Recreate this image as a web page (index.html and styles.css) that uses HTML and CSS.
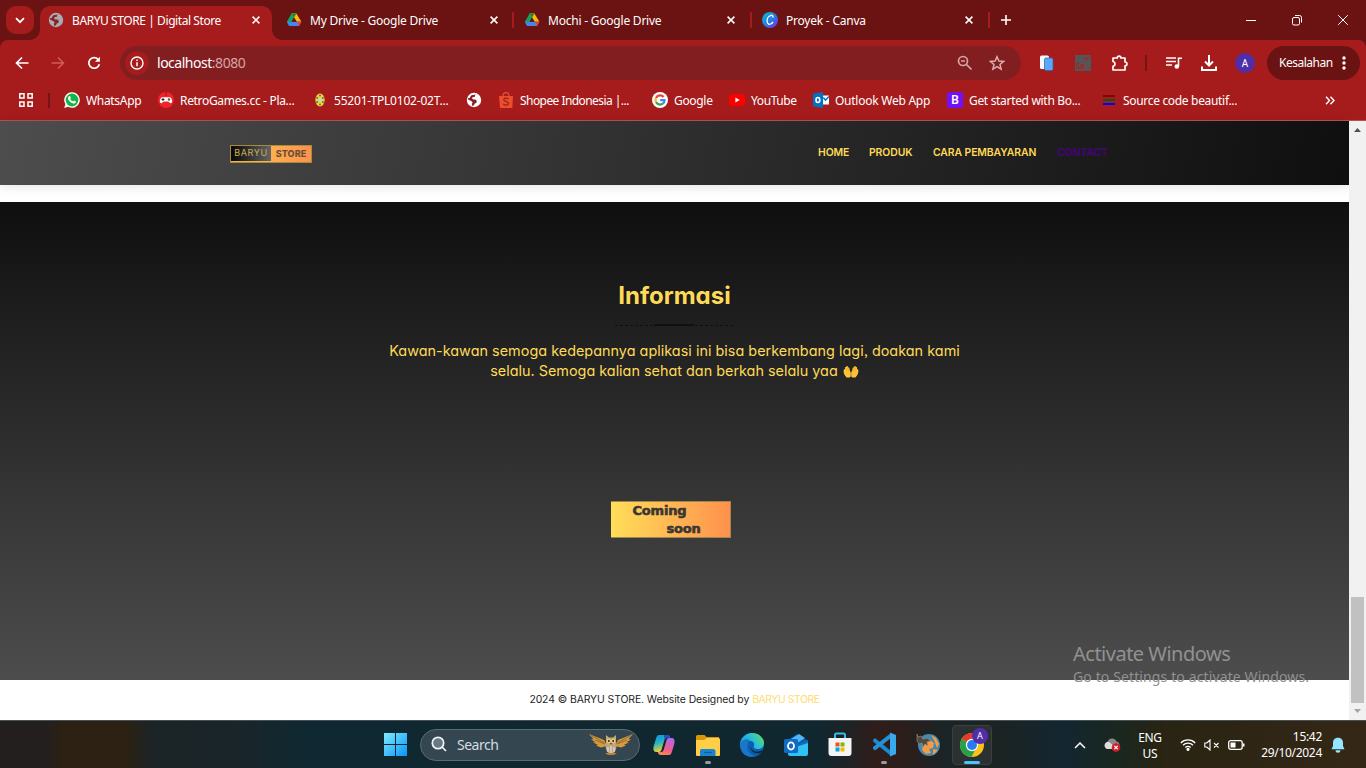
FILE: index.html
```html
<!DOCTYPE html>
<html lang="id">
<head>
<meta charset="utf-8">
<title>BARYU STORE | Digital Store</title>
<link rel="stylesheet" href="styles.css">
</head>
<body>
<svg width="0" height="0" class="defs" aria-hidden="true">
  <defs>
    <symbol id="drive" viewBox="0 0 16 16"><path fill="#12a65a" d="M5.6 1.5h4.7L3.3 14 .9 9.8z"/><path fill="#fbbc04" d="M5.6 1.5h4.8l5 8.3h-4.6z"/><path fill="#4285f4" d="M3.4 9.8h12L13 14H3.1L.9 9.8z"/><path fill="#188038" d="M5.6 1.5h4.8L8 5.6z"/><path fill="#6e1212" d="M8 5.6l2.4 4.2H5.6z"/><path fill="#ea4335" d="M10.9 9.8h4.5L13 14z"/></symbol>
    <symbol id="close" viewBox="0 0 10 10"><path d="M1.6 1.6l6.8 6.8M8.4 1.6L1.6 8.4" stroke="#fff" stroke-width="1.5"/></symbol>
    <symbol id="globe" viewBox="0 0 16 16"><circle cx="8" cy="8" r="7.2" fill="currentColor"/><path class="land" d="M10.500 2.400L9 3.300 8.800 5H6.700L6 6.600l1.300.9h2.200l1.300 1.600-.4 1.900-1.700.5-.7 1.800-1.700.6-.5-2.200.9-1.300-1.500-1.300-2.900-1.300-.4-1.600 1.900-.2.600-1.600L5.500 3.200l2.800-.5z"/></symbol>
  </defs>
</svg>

<header class="browser">
  <div class="tabstrip">
    <div class="tabsearch"><svg width="10" height="7" viewBox="0 0 10 7"><path d="M1 1.200l4 4 4-4" fill="none" stroke="#fff" stroke-width="1.800"/></svg></div>
    <div class="tab active"><svg class="fav gray" width="16" height="16"><use href="#globe"/></svg><span class="title t1">BARYU STORE | Digital Store</span><svg class="x" width="10" height="10"><use href="#close"/></svg></div>
    <div class="tab"><svg class="fav" width="16" height="16"><use href="#drive"/></svg><span class="title">My Drive - Google Drive</span><svg class="x" width="10" height="10"><use href="#close"/></svg></div>
    <div class="tab ruled"><svg class="fav" width="16" height="16"><use href="#drive"/></svg><span class="title">Mochi - Google Drive</span><svg class="x" width="10" height="10"><use href="#close"/></svg></div>
    <div class="tab ruled"><svg class="fav" width="16" height="16" viewBox="0 0 16 16"><defs><linearGradient id="cv" x1="0" y1="0" x2="1" y2="1"><stop offset="0" stop-color="#00c4cc"/><stop offset=".55" stop-color="#2a78e4"/><stop offset="1" stop-color="#7d2ae8"/></linearGradient></defs><circle cx="8" cy="8" r="8" fill="url(#cv)"/><path d="M10.900 5.700c.4-1.800-.7-2.700-2-2.400-2.500.6-4 3.400-3.800 6 .2 2.500 1.800 3.500 3.600 2.700.9-.4 1.800-1.200 2.300-2.100" fill="none" stroke="#fff" stroke-width="1.300"/></svg><span class="title">Proyek - Canva</span><svg class="x" width="10" height="10"><use href="#close"/></svg></div>
    <div class="newtab"><svg width="12" height="12" viewBox="0 0 12 12"><path d="M6 1v10M1 6h10" stroke="#fff" stroke-width="1.600"/></svg></div>
    <div class="wincontrols">
      <svg width="12" height="12" viewBox="0 0 12 12"><path d="M1 6.500h10" stroke="#fff"/></svg>
      <svg width="12" height="12" viewBox="0 0 12 12" fill="none" stroke="#fff"><rect x="1.500" y="3.500" width="7" height="7.500" rx="1.500"/><path d="M4 1.500h4.500a2 2 0 0 1 2 2V8.500"/></svg>
      <svg width="12" height="12" viewBox="0 0 12 12"><path d="M1.200 1.200l9.600 9.600M10.800 1.200l-9.600 9.600" stroke="#fff"/></svg>
    </div>
  </div>

  <div class="toolbar">
    <div class="navbtns">
      <svg width="14" height="14" viewBox="0 0 14 14" fill="none" stroke="#fff" stroke-width="1.700"><path d="M13.500 7H2M7 1.500L1.500 7 7 12.500"/></svg>
      <svg width="14" height="14" viewBox="0 0 14 14" fill="none" stroke="#d05c5c" stroke-width="1.500"><path d="M.5 7H12M7 1.500L12.500 7 7 12.500"/></svg>
      <svg width="14" height="14" viewBox="0 0 14 14"><path d="M12.300 8.200A5.300 5.300 0 1 1 11 3.300l1 1" fill="none" stroke="#fff" stroke-width="1.700"/><path d="M12.900.8v5H8z" fill="#fff"/></svg>
    </div>
    <div class="omnibox">
      <span class="info"><svg width="14" height="14" viewBox="0 0 14 14"><circle cx="7" cy="7" r="6" fill="none" stroke="#fff" stroke-width="1.400"/><path d="M7 6.200v4M7 3.500v1.500" stroke="#fff" stroke-width="1.500"/></svg></span>
      <span class="url">localhost<span class="port">:8080</span></span>
      <svg class="glass" width="16" height="16" viewBox="0 0 16 16" fill="none" stroke="#d3a6a6" stroke-width="1.700"><circle cx="6" cy="6" r="4.500"/><path d="M9.500 9.500l5 5M4 6h4"/></svg>
      <svg width="16" height="16" viewBox="0 0 16 16" fill="none" stroke="#d9adad" stroke-width="1.500"><path d="M8 1.700l1.900 4.300 4.700.4-3.600 3.100 1.100 4.600L8 11.600l-4.100 2.500L5 9.500 1.400 6.400l4.700-.4z"/></svg>
    </div>
    <div class="exts">
      <svg class="e1" width="16" height="18" viewBox="0 0 16 18"><rect x="1" y="1.500" width="9" height="13.500" rx="1.500" fill="#f6faff"/><rect x="5.500" y="4" width="8.500" height="12.500" rx="1.500" fill="#5ba7f8" stroke="#2461b5" stroke-width=".7"/></svg>
      <svg class="e2" width="16" height="16" viewBox="0 0 16 16"><path fill="#555" d="M0 0h16v16H0z"/><path d="M8 3.500h2l1 1 2-2h2" fill="none" stroke="#b0201f" stroke-width="1.200"/><text x="1" y="14" class="se">Se</text></svg>
      <svg class="e3" width="18" height="18" viewBox="0 0 18 18"><path d="M2 4h4.300a1.800 1.800 0 0 1 3.600 0H14v4a1.900 1.900 0 0 1 0 3.800V16H2v-3.700c2.700-.6 2.700-4.200 0-4.800z" fill="none" stroke="#fff" stroke-width="1.700" stroke-linejoin="round"/></svg>
      <span class="extrule"></span>
      <svg class="e4" width="16" height="14" viewBox="0 0 16 14"><path d="M0 2h10M0 5.500h10M0 9h6M12.500 10V2.200H16" fill="none" stroke="#fff" stroke-width="1.600"/><circle cx="10.800" cy="10.500" r="2.300" fill="#fff"/></svg>
      <svg class="e5" width="18" height="18" viewBox="0 0 18 18" fill="none" stroke="#fff" stroke-width="2"><path d="M9 1v10M5 7.500L9 11.500l4-4M2 12.500V16h14v-3.500"/></svg>
      <span class="avatar">A</span>
    </div>
    <div class="error"><span>Kesalahan</span><svg width="4" height="14" viewBox="0 0 4 14" fill="#fff"><circle cx="2" cy="2" r="1.700"/><circle cx="2" cy="7" r="1.700"/><circle cx="2" cy="12" r="1.700"/></svg></div>
  </div>

  <div class="bookmarks">
    <svg class="apps" width="14" height="14" viewBox="0 0 14 14" fill="none" stroke="#fff" stroke-width="1.500"><path d="M.8.800h4.200V5H.8zM9 .8h4.200V5H9zM.8 9h4.200v4.200H.8zM9 9h4.200v4.200H9z"/></svg>
    <span class="bmrule"></span>
    <div class="bm b1"><svg width="16" height="16" viewBox="0 0 16 16"><path fill="#fff" d="M8 .2a7.800 7.800 0 1 1-3.800 14.600L.2 16l1.200-3.900A7.800 7.800 0 0 1 8 .2z"/><circle cx="8" cy="8" r="6.400" fill="#13b547"/><path d="M5 4.300l1-.2.900 2-.7.900a5.500 5.500 0 0 0 2.800 2.500l.9-.9 2 .9c.2 2-1.900 2.400-3.500 1.800C5.900 10.300 4 8 4 6.500c0-1 .4-1.800 1-2.200z" fill="#fff"/></svg><span>WhatsApp</span></div>
    <div class="bm b2"><svg width="16" height="16" viewBox="0 0 16 16"><circle cx="8" cy="8" r="8" fill="#f22329"/><path d="M8 0v4" stroke="#9e1015"/><path fill="#fff" d="M4.500 5.200h7c2.800 0 3.600 6 1.200 6-1.400 0-1.500-1.600-3-1.600H6.300c-1.500 0-1.600 1.600-3 1.600-2.400 0-1.600-6 1.200-6z"/><path d="M3.500 7.500h3M5 6v3" stroke="#222"/><circle cx="11" cy="7.500" r="1.200" fill="#555"/></svg><span>RetroGames.cc - Pla...</span></div>
    <div class="bm b3"><svg width="16" height="16" viewBox="0 0 16 16"><ellipse cx="8" cy="8" rx="4.600" ry="6.400" fill="#eedb22"/><g fill="#5b6a87"><circle cx="8" cy="3.600" r="1"/><circle cx="5.200" cy="6" r="1"/><circle cx="10.800" cy="6" r="1"/><circle cx="5.200" cy="10" r="1"/><circle cx="10.800" cy="10" r="1"/><circle cx="8" cy="12.400" r="1"/></g><circle cx="8" cy="8" r="2" fill="#c9cfd8"/></svg><span>55201-TPL0102-02T...</span></div>
    <div class="bm b4"><svg class="white" width="16" height="16"><use href="#globe"/></svg></div>
    <div class="bm b5"><svg width="16" height="16" viewBox="0 0 16 16"><path fill="#ee4d2d" d="M1 4h14l-.7 12H2z"/><path d="M5 4c0-4.400 6-4.400 6 0" fill="none" stroke="#ee4d2d" stroke-width="1.200"/><path d="M10.500 7c-2-1.500-4.700-1-4.700.7 0 2 4.700 1.500 4.700 3.800 0 2-3.300 2-5.200.5" fill="none" stroke="#8f261b" stroke-width="1.300"/></svg><span>Shopee Indonesia |...</span></div>
    <div class="bm b6"><svg width="16" height="16" viewBox="0 0 16 16"><circle cx="8" cy="8" r="8" fill="#fff"/><g fill="none" stroke-width="2.200"><path d="M11.600 5A4.500 4.500 0 0 0 4 6" stroke="#ea4335"/><path d="M4 5.900a4.500 4.500 0 0 0 0 4.200" stroke="#fbbc04"/><path d="M4 10a4.500 4.500 0 0 0 7 1.400" stroke="#34a853"/><path d="M11 11.500c1-.8 1.500-2 1.500-3.300H8.200" stroke="#4285f4"/></g></svg><span>Google</span></div>
    <div class="bm b7"><svg width="16" height="16" viewBox="0 0 16 16"><rect y="2.300" width="16" height="11.400" rx="2.800" fill="#f00"/><path d="M6.400 5.500v5L10.700 8z" fill="#fff"/></svg><span>YouTube</span></div>
    <div class="bm b8"><svg width="16" height="16" viewBox="0 0 16 16"><path fill="#fff" d="M9 3.500h7v9H9z"/><path fill="#0072c6" d="M0 1.800L10 0v16L0 14.200z"/><path d="M10.300 5.500l2.200 2.700 3.300-3.700" fill="none" stroke="#0072c6" stroke-width="1.500"/><ellipse cx="4.900" cy="8" rx="1.900" ry="2.500" fill="none" stroke="#fff" stroke-width="1.600"/></svg><span>Outlook Web App</span></div>
    <div class="bm b9"><span class="boot">B</span><span>Get started with Bo...</span></div>
    <div class="bm b10"><svg width="16" height="16" viewBox="0 0 16 16"><path fill="#8b0000" d="M2 3h12v2H2z"/><path fill="#0a5a0a" d="M2 7h12v2H2z"/><path fill="#00f" d="M2 11h12v2H2z"/></svg><span>Source code beautif...</span></div>
    <svg class="more" width="10" height="9" viewBox="0 0 10 9" fill="none" stroke="#fff" stroke-width="1.400"><path d="M1 .8l3.500 3.700L1 8.200M5.500.8L9 4.500 5.500 8.200"/></svg>
  </div>
</header>

<div class="viewport">
  <main class="site">
    <div class="sitenav">
      <div class="logo"><span class="lb">BARYU</span><span class="ls">STORE</span></div>
      <nav><a class="n1">HOME</a><a class="n2">PRODUK</a><a class="n3">CARA PEMBAYARAN</a><a class="n4">CONTACT</a></nav>
    </div>
    <section class="hero">
      <h2>Informasi</h2>
      <div class="divider"><i></i></div>
      <p class="p1">Kawan-kawan semoga kedepannya aplikasi ini bisa berkembang lagi, doakan kami</p>
      <p class="p2"><span>selalu. Semoga kalian sehat dan berkah selalu yaa</span><svg width="16" height="14" viewBox="0 0 16 14"><path id="palm" d="M7.800 12.500L6.500 13.500H3.500C1.500 11.500.2 8.500.7 6.500L1 5l1 .6L2 3l1.200.2.300-1.200 1.300.2.500 1.300 1 .3.700 3.200.8 1.200z" fill="#fdc236"/><path d="M8.200 12.500l1.300 1h3c2-2 3.300-5 2.800-7L15 5l-1 .6V3l-1.200.2-.3-1.200-1.300.2-.5 1.300-1 .3-.7 3.200-.8 1.200z" fill="#fdc236"/><path d="M3.300 4l.9 3M5 3.700l.5 3M12.700 4l-.9 3M11 3.700l-.5 3" stroke="#ed9a23" stroke-width=".6"/></svg></p>
      <div class="coming"><span class="c1">Coming</span><span class="c2">soon</span></div>
    </section>
    <footer><span class="f1">2024 © BARYU STORE. Website Designed by</span><a class="f2">BARYU STORE</a></footer>
  </main>
  <div class="scrollbar"><svg width="7" height="4" viewBox="0 0 7 4"><path d="M0 4L3.500 0 7 4z" fill="#505050"/></svg><div class="thumb"></div><svg width="7" height="4" viewBox="0 0 7 4"><path d="M0 0h7L3.500 4z" fill="#a3a3a3"/></svg></div>
  <div class="watermark"><div class="w1">Activate Windows</div><div class="w2">Go to Settings to activate Windows.</div></div>
</div>

<div class="taskbar">
  <svg class="start" width="23" height="23" viewBox="0 0 23 23"><defs><linearGradient id="wn" x1="0" y1="0" x2="1" y2="1"><stop offset="0" stop-color="#80eaff"/><stop offset="1" stop-color="#0795f8"/></linearGradient></defs><path fill="url(#wn)" d="M0 0h11v11H0zM12 0h11v11H12zM0 12h11v11H0zM12 12h11v11H12z"/></svg>
  <div class="search">
    <svg width="16" height="16" viewBox="0 0 16 16" fill="#667985" stroke="#edf4f8" stroke-width="1.700"><circle cx="7" cy="7" r="5.700"/><path d="M11 11l4 4"/></svg>
    <span>Search</span>
    <svg class="owl" width="46" height="24" viewBox="0 0 46 24"><path d="M1 2l15 6 3 6-6 1.500-5-2 2-.8-5-2.200 2.500-.3L3 7.500l2.500-.3zM45 2L30 8l-3 6 6 1.500 5-2-2-.8 5-2.200-2.500-.3L43 7.500l-2.500-.3z" fill="#d89b3c"/><path d="M3 3.500l13 7M7 8l10 4M43 3.500l-13 7M39 8l-10 4" stroke="#8a5e28" stroke-width=".8"/><ellipse cx="23" cy="14" rx="5.500" ry="8" fill="#b9a48b"/><path d="M18 3l3 2.500h4L28 3v8l-5 3-5-3z" fill="#c7a96b"/><circle cx="20.800" cy="9" r="2" fill="#f3d78a"/><circle cx="25.200" cy="9" r="2" fill="#f3d78a"/><circle cx="20.800" cy="9" r="1" fill="#241f1a"/><circle cx="25.200" cy="9" r="1" fill="#241f1a"/><path d="M22 11h2l-1 2z" fill="#56401f"/><path d="M17 21h12l-3 2h-6z" fill="#b98338"/><path d="M20 15v5M23 14v7M26 15v5" stroke="#eee2cf" stroke-width="1.100"/></svg>
  </div>
  <div class="pinned">
    <div class="app"><svg width="24" height="24" viewBox="0 0 24 24"><defs><linearGradient id="co1" x1="0" y1="0" x2=".3" y2="1"><stop offset="0" stop-color="#168bea"/><stop offset=".5" stop-color="#24b5c0"/><stop offset="1" stop-color="#f4cf32"/></linearGradient><linearGradient id="co2" x1=".6" y1="0" x2=".2" y2="1"><stop offset="0" stop-color="#b267ed"/><stop offset=".6" stop-color="#f25c88"/><stop offset="1" stop-color="#ff8e45"/></linearGradient></defs><path fill="url(#co1)" d="M7 2h8c2 0 2.800 1 3.300 3h-3.500c-1.500 0-2 .8-2.400 2l-3 10c-.4 1.300-1 2-2.400 2H4c-3 0-3-4-2-7l2.200-7C4.700 3 5.500 2 7 2z"/><path fill="url(#co2)" d="M17 22H9c-2 0-2.800-1-3.300-3h3.500c1.500 0 2-.8 2.400-2l3-10c.4-1.300 1-2 2.400-2h3c3 0 3 4 2 7l-2.200 7c-.5 2-1.300 3-2.800 3z"/><path fill="#1752c0" d="M12 2h3c2 0 2.800 1 3.300 3h-3.500c-1 0-1.800.4-2.300 1.500z"/></svg></div>
    <div class="app run"><svg width="26" height="24" viewBox="0 0 26 24"><path fill="#d99608" d="M1 3.500A1.500 1.500 0 0 1 2.500 2h7l2 2H24v5H1z"/><path fill="#ffcd46" d="M1 7h8l3-2h11.500A1.500 1.500 0 0 1 25 6.500V22a1 1 0 0 1-1 1H2a1 1 0 0 1-1-1z"/><path fill="#1686d1" d="M5 23v-5c0-1.500.8-2 2-2h11c1.500 0 2.500.8 2.500 2v5z"/><path d="M9 19.500h8" stroke="#0d5e9e" stroke-width="1.200"/></svg></div>
    <div class="app"><svg width="26" height="26" viewBox="0 0 26 26"><defs><linearGradient id="ed" x1="0" y1=".7" x2="1" y2=".2"><stop offset="0" stop-color="#1698df"/><stop offset=".55" stop-color="#29bfd8"/><stop offset="1" stop-color="#62df55"/></linearGradient></defs><circle cx="13" cy="13" r="12" fill="#0d5dae"/><path fill="url(#ed)" d="M1 12C2 5 7 1 13 1c7 0 12 5 12 10 0 4-3 6-6 6-3 0-5-1-4-3 1-3-1-5-4-5-5 0-9 3-10 7z"/><path fill="#1976c9" d="M1 12c2-4 6-6 10-4-3 3-4 9 0 13 2 2 4 3 5 3C8 27 1 21 1 12z"/><path d="M12 13c-1 5 4 9 12 5l-1 2c-4 3-13 1-11-7z" fill="#10242d"/></svg></div>
    <div class="app"><svg width="26" height="24" viewBox="0 0 26 24"><path fill="#0a5daf" d="M5 7l9-6 10 6v6L14 19z"/><path fill="#51b7f4" d="M8 6l8-5 6 4-12 8z"/><path fill="#126dbe" d="M14 12l11-5v10H12z"/><path fill="#2fc3f3" d="M5 15h5l15-5v11a2 2 0 0 1-2 2H7c-1 0-2-1-2-2z"/><rect x="1" y="6" width="14" height="14" rx="1.500" fill="#0f6bc4"/><ellipse cx="8" cy="13" rx="3" ry="3.600" fill="none" stroke="#fff" stroke-width="1.800"/></svg></div>
    <div class="app"><svg width="24" height="25" viewBox="0 0 24 25"><path d="M7 7V3a1.500 1.500 0 0 1 1.500-1.500h7A1.500 1.500 0 0 1 17 3v4" fill="none" stroke="#38bdf3" stroke-width="2"/><path fill="#f4f4f4" d="M.5 6h23v15a3 3 0 0 1-3 3h-17a3 3 0 0 1-3-3z"/><path fill="#f25022" d="M7.500 10.500h4v4h-4z"/><path fill="#7fba00" d="M12.500 10.500h4v4h-4z"/><path fill="#00a4ef" d="M7.500 15.500h4v4h-4z"/><path fill="#ffb900" d="M12.500 15.500h4v4h-4z"/></svg></div>
    <div class="app run"><svg width="25" height="25" viewBox="0 0 25 25"><path fill="#168bd2" d="M1 8l2-2 16 13v5L1 9.500z"/><path fill="#2491d6" d="M1 16.500l2 2L19 6V1L1 15z"/><path fill="#39a9ee" d="M18 .5l6 2.500v19l-6 2.500z"/></svg></div>
    <div class="app"><svg width="26" height="26" viewBox="0 0 26 26"><circle cx="14" cy="13" r="11" fill="#4489b2"/><path fill="#f69a43" d="M8 13l7-5 4 3-1 5-4 1 2 4-5 1-4-4zM16 3l5 3 3 6-2 4-3-8zM18 17l5 1-5 5z"/><path d="M2 2l1 3 3-1 2 3 4-1 4 3-4 1 1 4-3-2-2 3-1-4-3 1-2-3z" fill="#4e4b46" stroke="#a59473" stroke-width=".6"/></svg></div>
    <div class="app current"><svg width="26" height="26" viewBox="0 0 26 26"><circle cx="13" cy="13" r="12" fill="#fbc318"/><path fill="#e33b2e" d="M13 13L2.600 7a12 12 0 0 1 20.800 0z"/><path fill="#25a14c" d="M2.600 7a12 12 0 0 0 9.800 18l5-9.200L13 13z"/><circle cx="13" cy="13" r="6.200" fill="#fff"/><circle cx="13" cy="13" r="4.900" fill="#287cf0"/></svg><span class="badge">A</span></div>
  </div>
  <div class="tray">
    <svg class="chev" width="12" height="8" viewBox="0 0 12 8"><path d="M1 7l5-5 5 5" fill="none" stroke="#fff" stroke-width="1.500"/></svg>
    <svg class="cloud" width="17" height="14" viewBox="0 0 17 14"><path d="M4 11a3.700 3.700 0 0 1-.5-7.200 4.800 4.800 0 0 1 9-.4c3 .4 4 4 2 6.600L12 11z" fill="#888"/><path d="M4 11a3.500 3.500 0 1 1 2.500-6l6 6z" fill="#ddd"/><circle cx="12" cy="9.500" r="4.300" fill="#d81d2a"/><path d="M10.300 7.800l3.400 3.400m0-3.400l-3.400 3.400" stroke="#fff" stroke-width="1.200"/></svg>
    <div class="lang"><span>ENG</span><span>US</span></div>
    <svg class="wifi" width="16" height="13" viewBox="0 0 16 13" fill="none" stroke="#fff" stroke-width="1.300"><path d="M.8 5a10 10 0 0 1 14.400 0M3 7.300a7 7 0 0 1 10 0M5.300 9.600a4 4 0 0 1 5.400 0"/><circle cx="8" cy="11.300" r="1" fill="#fff"/></svg>
    <svg class="vol" width="16" height="12" viewBox="0 0 16 12" fill="none" stroke="#fff" stroke-width="1.100"><path d="M.8 4v4h2L6 11V1L2.800 4zM10 4l4.500 4.500m0-4.500L10 8.500"/></svg>
    <svg class="bat" width="17" height="10" viewBox="0 0 17 10"><rect x=".7" y=".7" width="13.500" height="8.600" rx="2" fill="none" stroke="#fff" stroke-width="1.300"/><path fill="#fff" d="M2.500 2.500h5v5h-5zM15 3.500h1.500v3H15z"/></svg>
    <div class="clock"><span>15:42</span><span class="date">29/10/2024</span></div>
    <svg class="bell" width="14" height="16" viewBox="0 0 14 16"><path fill="#94e5ff" d="M7 .8c3.300 0 5 2.300 5 5V9l1.500 3.300H.5L2 9V5.800c0-2.700 1.700-5 5-5zM4.500 13.300h5a2.500 2.500 0 0 1-5 0z"/></svg>
  </div>
</div>
</body>
</html>
```
FILE: styles.css
```css
* { box-sizing: border-box; }
body { margin: 0; width: 1366px; height: 768px; overflow: hidden; font-family: "Noto Sans", "Open Sans", sans-serif; font-size: 12px; color: #fff; background: #fff; display: flex; flex-direction: column; }
svg { flex: none; display: block; }
span, a, p, h2 { white-space: nowrap; }
.defs { position: absolute; }
.browser { height: 121px; background: #6b1212; border-bottom: 1px solid #b85351; }

.tabstrip { height: 40px; display: flex; align-items: center; padding-left: 6px; }
.tabsearch { width: 28px; height: 28px; border-radius: 10px; background: #a61c1d; display: flex; align-items: center; justify-content: center; margin-right: 6px; }
.tab { width: 238px; height: 24px; display: flex; align-items: center; padding: 0 13px 0 12px; border-left: 2px solid transparent; }
.tab.ruled, .newtab { background: linear-gradient(#a61c1d, #a61c1d) 0 center / 2px 16px no-repeat; }
.tab.ruled { border: 0; padding-left: 12px; padding-right: 14px; }
.tab.active { width: 232px; height: 34px; align-self: flex-end; background: #a61c1d; border-radius: 10px 10px 0 0; padding: 0 11px 6px 8px; border: 0; position: relative; }
.tab.active::before, .tab.active::after { content: ""; position: absolute; bottom: 0; width: 10px; height: 10px; }
.tab.active::before { left: -10px; background: radial-gradient(circle at 0 0, transparent 9.5px, #a61c1d 10px); }
.tab.active::after { right: -10px; background: radial-gradient(circle at 100% 0, transparent 9.5px, #a61c1d 10px); }
.tab.active + .tab { width: 240px; }
.title { margin-left: 8px; flex: 1; letter-spacing: -.22px; }
.title.t1 { letter-spacing: -.42px; }
.gray { color: #a6adb2; }
.white { color: #fff; }
.land { fill: #8d2025; }
.newtab { width: 36px; height: 24px; display: flex; align-items: center; padding-left: 12px; }
.wincontrols { margin-left: auto; display: flex; gap: 34px; padding-right: 17px; }

.toolbar { height: 45px; background: #a61c1d; border-radius: 8px 8px 0 0; display: flex; align-items: center; padding: 1px 6px 0 15px; }
.navbtns { display: flex; gap: 22px; width: 105px; }
.omnibox { width: 901px; height: 34px; border-radius: 17px; background: #821e1f; display: flex; align-items: center; padding: 0 16px 0 5px; }
.info { width: 24px; height: 24px; border-radius: 50%; background: #a61c1d; display: flex; align-items: center; justify-content: center; margin-right: 8px; }
.url { font-size: 14px; letter-spacing: -.48px; flex: 1; padding-bottom: 1px; }
.port { color: #d6a4a4; }
.glass { margin-right: 16px; }
.exts { width: 246px; padding-left: 18px; display: flex; align-items: center; }
.e2 { margin-left: 20px; }
.e3 { margin-left: 20px; }
.se { font: bold 8px "Noto Sans", sans-serif; fill: #b0201f; }
.extrule { width: 2px; height: 16px; background: #741416; margin: 0 19px 0 16px; }
.e5 { margin-left: 18px; }
.avatar { width: 20px; height: 20px; border-radius: 50%; background: #512da8; font-size: 10px; line-height: 20px; text-align: center; margin-left: 17px; }
.error { width: 93px; height: 34px; border-radius: 17px; background: #6b1212; display: flex; align-items: center; justify-content: space-between; padding: 0 14px 1px 12px; letter-spacing: -.5px; }

.bookmarks { height: 35px; background: #a61c1d; display: flex; align-items: center; padding: 0 0 5px 19px; }
.bmrule { width: 2px; height: 15px; background: #741416; margin: 0 14px 0 15px; }
.bm { display: flex; align-items: center; gap: 6px; letter-spacing: -.32px; }
.b1 { width: 94px; }
.b2, .b3, .b5, .b9 { width: 154px; }
.b3 { letter-spacing: -.2px; }
.b4 { width: 32px; }
.b5 { letter-spacing: -.56px; }
.b6 { width: 77px; }
.b7 { width: 84px; letter-spacing: -.4px; }
.b8 { width: 134px; letter-spacing: -.25px; }
.b10 { width: 224px; }
.boot { width: 16px; height: 16px; background: #7012f5; border-radius: 2px; font-size: 12px; line-height: 16px; text-align: center; font-weight: 600; letter-spacing: 0; }

.viewport { height: 599px; display: flex; position: relative; }
.site { width: 1349px; font-family: Inter, "Noto Sans", sans-serif; font-feature-settings: "cv11", "ss03"; color: #ffda57; }
.sitenav { height: 64px; background: linear-gradient(100deg, #4d4d4d, #0f0f0f); box-shadow: 0 1px 12px rgba(0, 0, 0, .12); display: flex; align-items: center; justify-content: space-between; padding: 0 241px 0 230px; }
.logo { width: 82px; height: 18px; margin-top: 2px; border: 1px solid #a88c3b; background: linear-gradient(90deg, #e8b944, #ffae4f 50%, #ff914d); display: flex; font-size: 9px; line-height: 14px; }
.lb { width: 40px; margin: 0 0 1px; background: linear-gradient(90deg, #070707, #656565); color: #cbb34d; text-align: center; letter-spacing: .65px; }
.ls { flex: 1; margin-top: 1px; color: #665039; font-weight: 800; text-align: center; letter-spacing: .1px; }
.sitenav nav { display: flex; font-size: 10.4px; font-weight: 600; letter-spacing: -.08px; padding-bottom: 1px; }
.n1 { width: 51px; }
.n2 { width: 64px; }
.n3 { width: 124px; }
.n4 { width: 51px; color: #4b0082; }
.hero { margin-top: 17px; height: 478px; background: linear-gradient(#0f0f0f, #4d4d4d); display: flex; flex-direction: column; align-items: center; padding-top: 79px; }
.hero h2 { margin: 0; font-size: 24px; line-height: 30px; font-weight: 700; }
.divider { margin-top: 13px; width: 120px; height: 3px; display: flex; justify-content: center; background: repeating-linear-gradient(90deg, #101010 0 3px, transparent 3px 5px) 0 1px / 120px 1px no-repeat; }
.divider i { width: 40px; height: 2px; margin-left: -1px; background: #101010; }
.hero p { margin: 0; font-size: 14.4px; line-height: 20px; }
.hero .p1 { margin-top: 14px; letter-spacing: .02px; }
.p2 { display: flex; align-items: center; gap: 5px; }
.coming { width: 120px; height: 37px; margin: 120px 8px 0 0; background: linear-gradient(90deg, #ffde59, #ff914d); border: 1px solid #a0864d; border-left: 0; color: #3a3732; font: 900 13px/18px "DejaVu Sans", sans-serif; letter-spacing: -.2px; -webkit-text-stroke: .6px #3a3732; display: flex; flex-direction: column; }
.c1 { padding-left: 22px; }
.c2 { padding-left: 56px; }
.site footer { height: 40px; background: #fff; font-size: 10.4px; line-height: 40px; display: flex; justify-content: center; gap: 3px; color: #222; }
.f1 { letter-spacing: -.08px; }
.f2 { color: #ffdc70; letter-spacing: -.42px; }
.scrollbar { width: 17px; background: #f1f1f1; display: flex; flex-direction: column; align-items: center; padding-top: 7px; }
.thumb { width: 13px; height: 106px; margin: 465px 0 6px; background: #c1c1c1; }
.watermark { position: absolute; left: 1073px; top: 519px; color: #919191; pointer-events: none; }
.w1 { font-size: 20px; line-height: 28px; letter-spacing: -.5px; }
.w2 { font-size: 14px; line-height: 18px; letter-spacing: .12px; }

.taskbar { height: 48px; border-top: 1px solid #485057; background: linear-gradient(90deg, #231f1e 0, #231f1f 45px, #2c2112 65px, #2c2112 125px, #1b2427 155px, #1a2529 230px, #102831 300px, #10272f 820px, #2f1d1a 875px, #2c1e1b 905px, #1b2426 945px, #1b2323 1000px, #132631 1060px, #192720 1115px, #292413 1165px, #352716 1366px); display: flex; align-items: center; padding-left: 384px; }
.search { width: 220px; height: 32px; margin-left: 13px; border: 1px solid #586a73; border-radius: 16px; background: #344751; display: flex; align-items: center; padding: 0 0 1px 10px; font-size: 14px; color: #d5dce0; }
.search span { margin-left: 10px; letter-spacing: -.5px; }
.owl { margin-left: auto; margin-right: 5px; }
.pinned { display: flex; gap: 4px; margin-left: 4px; }
.app { width: 40px; height: 40px; border-radius: 4px; display: flex; align-items: center; justify-content: center; position: relative; }
.run::after, .current::after { content: ""; position: absolute; left: 17px; bottom: 1px; width: 6px; height: 3px; border-radius: 2px; background: #9b9b9b; }
.current { background: #2b3030; border: 1px solid #3b4040; }
.current::after { left: 11px; bottom: 0; width: 16px; background: #4cc2ff; }
.badge { position: absolute; right: 3px; top: 2px; width: 16px; height: 16px; border-radius: 50%; background: #512da8; font-size: 9px; line-height: 16px; text-align: center; }
.tray { display: flex; align-items: center; margin-left: 82px; font-size: 12px; line-height: 16px; letter-spacing: -.3px; }
.cloud { margin-left: 18px; }
.lang { width: 34px; margin: 2px 13px 0 12px; display: flex; flex-direction: column; align-items: center; }
.vol { margin-left: 8px; }
.bat { margin-left: 8px; }
.clock { width: 77px; display: flex; flex-direction: column; align-items: flex-end; margin-right: 9px; }
```
